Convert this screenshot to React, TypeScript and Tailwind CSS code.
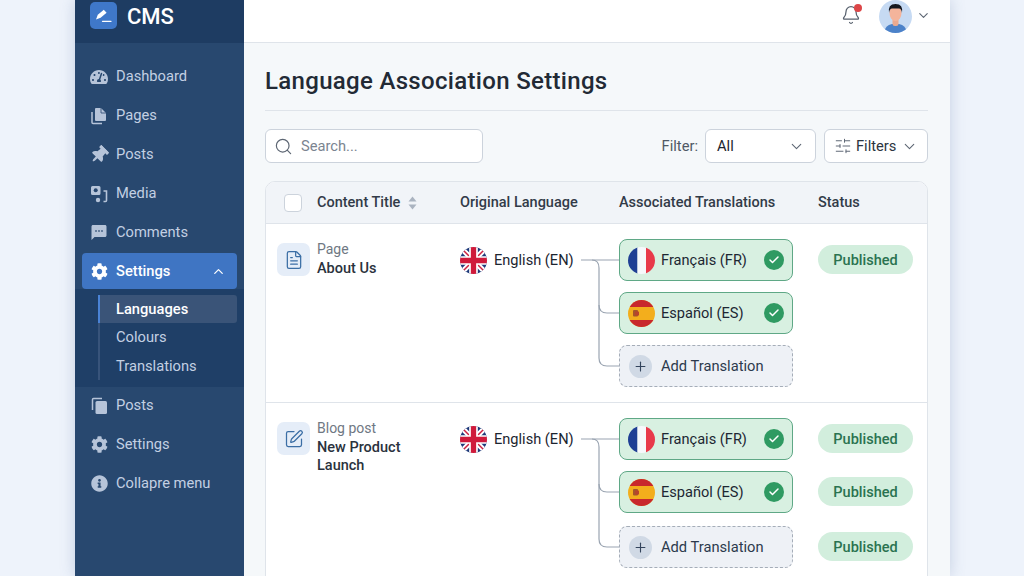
import type { ReactNode } from "react";
import { Bell, Check, ChevronDown, ChevronUp, FileText, Plus, Search, SlidersHorizontal, SquarePen } from "lucide-react";
import { FaCog, FaInfoCircle, FaTachometerAlt, FaThumbtack } from "react-icons/fa";
import { MdTextsms } from "react-icons/md";

const LogoMark = () => (
  <svg width="27" height="27" viewBox="0 0 27 27" fill="none">
    <rect width="27" height="27" rx="5" fill="#3f78c9" />
    <path d="M6 17.500 L7.800 12.800 L13.800 7.800 L16.600 10.800 L10.600 15.800 Z" fill="white" />
    <path d="M12.500 19.300 H21" stroke="white" strokeWidth="1.300" strokeLinecap="round" />
  </svg>
);

const PagesIcon = () => (
  <svg width="18" height="18" viewBox="0 0 18 18" fill="none">
    <path d="M2 5 V15.500 Q2 16.500 3 16.500 H12" stroke="#b6c4d9" strokeWidth="1.500" />
    <path d="M5 2 Q5 1 6 1 H11 L16 6 V13 Q16 14 15 14 H6 Q5 14 5 13 Z" fill="#b6c4d9" />
    <path d="M11 1 V6 H16" stroke="#28486f" strokeWidth="0.800" />
  </svg>
);

const MediaIcon = () => (
  <svg width="18" height="18" viewBox="0 0 18 18" fill="none">
    <path d="M1 2.500 A1.500 1.500 0 0 1 2.500 1 H9 A1.500 1.500 0 0 1 10.500 2.500 V8.500 A1.500 1.500 0 0 1 9 10 H2.500 A1.500 1.500 0 0 1 1 8.500 Z" fill="#b6c4d9" />
    <circle cx="5.700" cy="5.300" r="2" fill="#27476f" />
    <circle cx="8" cy="15" r="2.200" fill="#b6c4d9" />
    <path d="M13.500 6 H16.500 V15.500 Q16.500 16.500 15.500 16.500 H13.500" stroke="#b6c4d9" strokeWidth="1.600" />
  </svg>
);

const PostsCopyIcon = () => (
  <svg width="17" height="18" viewBox="0 0 17 18" fill="none">
    <path d="M1.500 13 V2.500 Q1.500 1.500 2.500 1.500 H11" stroke="#b6c4d9" strokeWidth="1.500" />
    <rect x="4.500" y="4" width="11.500" height="13" rx="1.500" fill="#b6c4d9" />
  </svg>
);

const UkFlag = () => (
  <svg width="27" height="27" viewBox="0 0 28 28" className="shrink-0">
    <defs>
      <clipPath id="uk"><circle cx="14" cy="14" r="14" /></clipPath>
    </defs>
    <g clipPath="url(#uk)">
      <rect width="28" height="28" fill="#1f3a7a" />
      <path d="M0 0 L28 28 M28 0 L0 28" stroke="#fff" strokeWidth="5.500" />
      <path d="M0 0 L28 28 M28 0 L0 28" stroke="#cf2240" strokeWidth="1.500" />
      <path d="M14 0 V28 M0 14 H28" stroke="#fff" strokeWidth="9" />
      <path d="M14 0 V28 M0 14 H28" stroke="#cf1b3b" strokeWidth="5.500" />
    </g>
  </svg>
);

const FrFlag = () => (
  <svg width="27" height="27" viewBox="0 0 27 27" className="shrink-0">
    <defs>
      <clipPath id="fr"><circle cx="13.500" cy="13.500" r="13.500" /></clipPath>
    </defs>
    <g clipPath="url(#fr)">
      <rect width="9.500" height="27" fill="#1f3f94" />
      <rect x="9.500" width="8.500" height="27" fill="#f7f8fb" />
      <rect x="18" width="9" height="27" fill="#e8394a" />
    </g>
  </svg>
);

const EsFlag = () => (
  <svg width="27" height="27" viewBox="0 0 27 27" className="shrink-0">
    <defs>
      <clipPath id="es"><circle cx="13.500" cy="13.500" r="13.500" /></clipPath>
    </defs>
    <g clipPath="url(#es)">
      <rect width="27" height="27" fill="#f3ae1c" />
      <rect width="27" height="7" fill="#c8282d" />
      <rect y="20" width="27" height="7" fill="#c8282d" />
      <rect x="5" y="10" width="5" height="6.500" rx="1" fill="#a5562a" />
      <rect x="7" y="11.500" width="4" height="4" rx="0.500" fill="#b8442c" />
    </g>
  </svg>
);

const Avatar = () => (
  <svg width="33" height="33" viewBox="0 0 33 33" className="shrink-0">
    <defs>
      <clipPath id="av"><circle cx="16.500" cy="16.500" r="16.500" /></clipPath>
    </defs>
    <g clipPath="url(#av)">
      <rect width="33" height="33" fill="#c6daf3" />
      <path d="M5 33 Q6 25 13 24 H20 Q27 25 28 33 Z" fill="#4c82c9" />
      <rect x="13.500" y="18" width="6" height="8" rx="2.500" fill="#eba98f" />
      <ellipse cx="16.500" cy="13" rx="6" ry="8" fill="#f4b49b" />
      <path d="M10 13 Q8.500 4 16.500 4 Q24.500 4 23 13 Q22.500 8.500 20 8.500 H13 Q10.500 8.500 10 13 Z" fill="#14171f" />
    </g>
  </svg>
);

const SortIcon = () => (
  <svg width="9" height="14" viewBox="0 0 9 14">
    <path d="M4.500 0.500 L8.500 5.500 H0.500 Z" fill="#aab3c0" />
    <path d="M4.500 13.500 L8.500 8.500 H0.500 Z" fill="#aab3c0" />
  </svg>
);

const NavItem = ({ icon, label }: { icon: ReactNode; label: string }) => (
  <div className="flex h-[39px] items-center gap-[8px] px-[15px] text-[14.700px] text-[#c3d0e3]">
    <span className="flex w-[18px] justify-center text-[#b6c4d9]">{icon}</span>
    {label}
  </div>
);

const Sidebar = () => (
  <aside className="flex w-[169px] shrink-0 flex-col bg-[#28486f]">
    <div className="flex h-[43px] shrink-0 items-start gap-[10px] bg-[#1e3c62] pl-[15px] pt-[2px]">
      <LogoMark />
      <span className="mt-[1px] text-[22px] leading-[28px] font-medium text-white">CMS</span>
    </div>
    <nav className="flex flex-col pt-[14px]">
      <NavItem icon={<FaTachometerAlt size={18} />} label="Dashboard" />
      <NavItem icon={<PagesIcon />} label="Pages" />
      <NavItem icon={<FaThumbtack size={18} className="rotate-45" />} label="Posts" />
      <NavItem icon={<MediaIcon />} label="Media" />
      <NavItem icon={<MdTextsms size={19} />} label="Comments" />
      <div className="mx-[7px] mt-[1px] flex h-[36px] items-center gap-[8px] rounded-[4px] bg-[#3f75c3] px-[8px] text-[14.700px] font-medium text-white">
        <span className="flex w-[18px] justify-center"><FaCog size={17} /></span>
        Settings
        <ChevronUp size={15} className="ml-auto mr-[3px]" />
      </div>
      <div className="bg-[#1f3f67] pb-[7px] pt-[6px] pl-[23px] pr-[7px] text-[14.700px] text-[#c3d0e3]">
        <div className="border-l-2 border-[#38547b]">
          <div className="-ml-[2px] flex h-[28px] items-center rounded-r-[3px] border-l-2 border-[#4a83d6] bg-[#3a5478] pl-[16px] font-medium text-white">Languages</div>
          <div className="flex h-[28px] items-center pl-[16px]">Colours</div>
          <div className="mt-[1px] flex h-[28px] items-center pl-[16px]">Translations</div>
        </div>
      </div>
      <div className="-mt-[1px]">
        <NavItem icon={<PostsCopyIcon />} label="Posts" />
        <NavItem icon={<FaCog size={17} />} label="Settings" />
        <NavItem icon={<FaInfoCircle size={17} />} label="Collapre menu" />
      </div>
    </nav>
  </aside>
);

const TopBar = () => (
  <header className="flex h-[43px] shrink-0 items-start justify-end border-b border-[#dfe4ea] bg-white pr-[19px]">
    <div className="relative mt-[5px] mr-[18px] text-[#58616e]">
      <Bell size={20} strokeWidth={1.500} />
      <span className="absolute -right-[1px] top-[-1px] h-[8px] w-[8px] rounded-full bg-[#dc4648]" />
    </div>
    <Avatar />
    <ChevronDown size={15} strokeWidth={1.800} className="ml-[4px] mt-[8px] text-[#5d6673]" />
  </header>
);

const Toolbar = () => (
  <div className="mt-[18px] flex items-center justify-between">
    <div className="flex h-[34px] w-[218px] items-center gap-[8px] rounded-[6px] border border-[#ccd3dc] bg-white pl-[8px] text-[14.700px] text-[#7b8490]">
      <Search size={19} strokeWidth={1.500} className="text-[#5d6673]" />
      Search...
    </div>
    <div className="flex items-center text-[14.700px]">
      <span className="mr-[7px] text-[#4f5865]">Filter:</span>
      <div className="flex h-[34px] w-[111px] items-center justify-between rounded-[6px] border border-[#ccd3dc] bg-white pl-[11px] pr-[10px] text-[#1c2530]">
        All
        <ChevronDown size={17} strokeWidth={1.500} className="text-[#5d6673]" />
      </div>
      <div className="ml-[8px] flex h-[34px] w-[104px] items-center gap-[4px] rounded-[6px] border border-[#ccd3dc] bg-white pl-[9px] text-[#2b3440]">
        <SlidersHorizontal size={18} strokeWidth={1.300} className="text-[#5d6673]" />
        Filters
        <ChevronDown size={17} strokeWidth={1.500} className="ml-[1px] text-[#5d6673]" />
      </div>
    </div>
  </div>
);

const Connector = ({ midY, addY }: { midY: number; addY: number }) => (
  <svg width="38" height={addY + 32} className="absolute left-[121px] top-0" fill="none" stroke="#9aa4b1" strokeWidth="1.200">
    <path d="M0 21 H38" />
    <path d={`M11 21 Q18 21 18 29 V${21 + midY - 8} Q18 ${21 + midY} 26 ${21 + midY} H38`} />
    <path d={`M18 ${21 + midY - 8} V${21 + addY - 8} Q18 ${21 + addY} 26 ${21 + addY} H38`} />
  </svg>
);

const TranslationChip = ({ flag, label }: { flag: ReactNode; label: string }) => (
  <div className="flex h-[42px] w-[174px] items-center rounded-[8px] border border-[#5fa886] bg-[#d8f0e1] pl-[8px] pr-[8px] text-[14.600px] text-[#1d2733]">
    {flag}
    <span className="ml-[6px] pt-[1px]">{label}</span>
    <span className="ml-auto flex h-[20px] w-[20px] items-center justify-center rounded-full bg-[#2f9a62] text-white">
      <Check size={12} strokeWidth={3} />
    </span>
  </div>
);

const AddChip = () => (
  <div className="flex h-[42px] w-[174px] items-center rounded-[8px] border border-dashed border-[#a5adb8] bg-[#eef1f6] pl-[9px] text-[14.700px] text-[#2c3a4d]">
    <span className="flex h-[23px] w-[23px] items-center justify-center rounded-full bg-[#d0d9e5] text-[#33445c]">
      <Plus size={15} strokeWidth={1.800} />
    </span>
    <span className="ml-[9px]">Add Translation</span>
  </div>
);

const Pill = () => (
  <span className="mb-[1px] flex h-[29px] w-[95px] items-center justify-center rounded-full bg-[#d2eedd] pt-[2px] text-[14.500px] font-medium text-[#2a7350]">
    Published
  </span>
);

const ContentRow = ({ icon, kind, title, addGap, midY, addY, pills, divided }: { icon: ReactNode; kind: string; title: ReactNode; addGap: string; midY: number; addY: number; pills: boolean[]; divided?: boolean }) => (
  <div className={`grid grid-cols-[194px_159px_199px_1fr] pb-[15px] pt-[15px] ${divided ? "border-t border-[#dfe4ea]" : ""}`}>
    <div className="flex pl-[11px]">
      <div className="mt-[4px] flex h-[33px] w-[33px] shrink-0 items-center justify-center rounded-[7px] bg-[#e5edf8] text-[#3b6ea5]">{icon}</div>
      <div className="ml-[7px]">
        <div className="text-[14px] leading-[20px] text-[#6f7883]">{kind}</div>
        <div className="mt-[1px] text-[14.500px] leading-[18px] font-medium text-[#2a323d]">{title}</div>
      </div>
    </div>
    <div className="relative flex h-[42px] items-center">
      <UkFlag />
      <span className="ml-[7px] pt-[1px] text-[14.600px] text-[#1c2530]">English (EN)</span>
      <Connector midY={midY} addY={addY} />
    </div>
    <div className="flex flex-col">
      <TranslationChip flag={<FrFlag />} label="Français (FR)" />
      <div className="mt-[11px]"><TranslationChip flag={<EsFlag />} label="Español (ES)" /></div>
      <div className={addGap}><AddChip /></div>
    </div>
    <div className="flex flex-col">
      <div className="flex h-[42px] items-center">{pills[0] && <Pill />}</div>
      <div className="mt-[11px] flex h-[42px] items-center">{pills[1] && <Pill />}</div>
      <div className={`${addGap} flex h-[42px] items-center`}>{pills[2] && <Pill />}</div>
    </div>
  </div>
);

const ContentTable = () => (
  <div className="mt-[18px] overflow-hidden rounded-t-[10px] border border-[#dfe4ea] bg-white">
    <div className="grid h-[42px] grid-cols-[194px_159px_199px_1fr] items-center border-b border-[#dfe4ea] bg-[#f1f4f8] pt-[1px] text-[14.500px] font-medium text-[#323b48]">
      <div className="flex items-center pl-[18px]">
        <span className="h-[18px] w-[18px] rounded-[4px] border border-[#ccd3dc] bg-white" />
        <span className="ml-[15px]">Content Title</span>
        <span className="ml-[8px]"><SortIcon /></span>
      </div>
      <div>Original Language</div>
      <div>Associated Translations</div>
      <div>Status</div>
    </div>
    <ContentRow
      icon={<FileText size={20} strokeWidth={1.500} />}
      kind="Page"
      title="About Us"
      addGap="mt-[11px]"
      midY={53}
      addY={106}
      pills={[true, false, false]}
    />
    <ContentRow
      icon={<SquarePen size={20} strokeWidth={1.500} />}
      kind="Blog post"
      title={<>New Product<br />Launch</>}
      addGap="mt-[13px]"
      midY={53}
      addY={108}
      pills={[true, true, true]}
      divided
    />
  </div>
);

export default function App() {
  return (
    <div className="h-[576px] w-[1024px] overflow-hidden bg-[#eef3fb] pl-[75px] font-['Roboto',sans-serif]">
      <div className="flex h-full w-[875px] shadow-[0_0_14px_rgba(70,100,150,0.25)]">
        <Sidebar />
        <div className="flex min-w-0 flex-1 flex-col bg-[#f5f8fa]">
          <TopBar />
          <main className="pl-[21px] pr-[22px] pt-[22px]">
            <h1 className="border-b border-[#dfe4ea] pb-[13px] text-[24px] leading-[32px] font-medium tracking-[0.320px] text-[#222a35]">Language Association Settings</h1>
            <Toolbar />
            <ContentTable />
          </main>
        </div>
      </div>
    </div>
  );
}
